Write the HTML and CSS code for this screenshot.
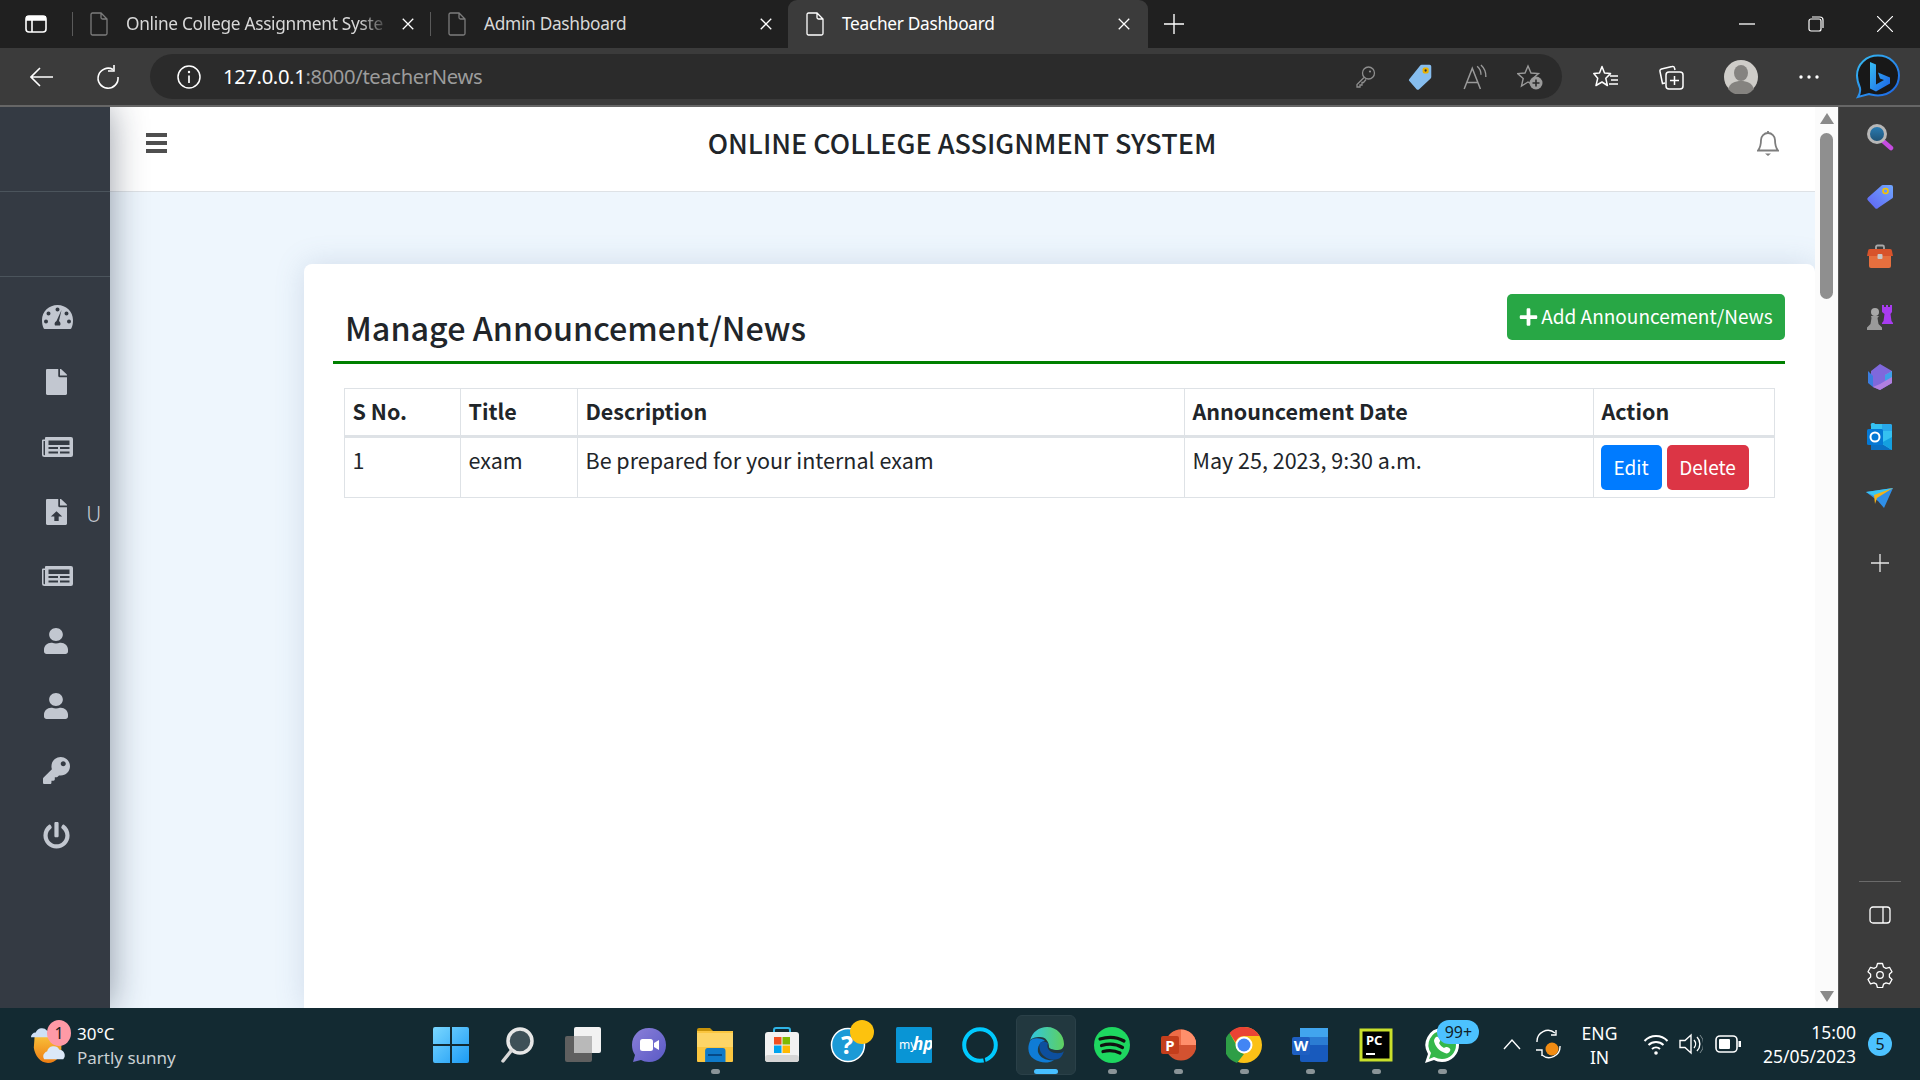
FILE: index.html
```html
<!DOCTYPE html>
<html lang="en">
<head>
<meta charset="utf-8">
<title>Teacher Dashboard</title>
<link rel="stylesheet" href="styles.css">
</head>
<body>
<svg class="defs" aria-hidden="true">
  <symbol id="doc" viewBox="0 0 18 24"><path d="M2.5 1h8.5l6 6v14.5a1.5 1.5 0 0 1-1.5 1.5h-13A1.5 1.5 0 0 1 1 21.5V2.5A1.5 1.5 0 0 1 2.5 1zM11 1v4.500A1.500 1.500 0 0 0 12.500 7H17" fill="none" stroke="currentColor" stroke-width="1.300"/></symbol>
  <symbol id="x" viewBox="0 0 16 16"><path d="M2 2l12 12M14 2L2 14" stroke="currentColor" stroke-width="1.500" fill="none"/></symbol>
  <symbol id="fa-file" viewBox="0 0 384 512" preserveAspectRatio="none"><path d="M224 136V0H24C10.700 0 0 10.700 0 24v464c0 13.300 10.700 24 24 24h336c13.300 0 24-10.700 24-24V160H248c-13.200 0-24-10.800-24-24zm160-14.100v6.100H256V0h6.100c6.400 0 12.500 2.500 17 7l97.900 98c4.500 4.500 7 10.600 7 16.900z"/></symbol>
  <symbol id="fa-news" viewBox="0 0 62 40" preserveAspectRatio="none"><path fill-rule="evenodd" d="M8 0h50a4 4 0 0 1 4 4v32a4 4 0 0 1-4 4H5a5 5 0 0 1-5-5V7a2 2 0 0 1 2-2h4V2a2 2 0 0 1 2-2zM3 8v27a2 2 0 0 0 3 1V8zm10-1v9h42V7zm0 13v4h19v-4zm23 0v4h19v-4zM13 29v4h19v-4zm23 0v4h19v-4z"/></symbol>
  <symbol id="fa-user" viewBox="0 0 448 512" preserveAspectRatio="none"><path d="M224 256c70.700 0 128-57.300 128-128S294.700 0 224 0 96 57.300 96 128s57.300 128 128 128zm89.600 32h-16.700c-22.200 10.200-46.900 16-72.900 16s-50.600-5.800-72.900-16h-16.700C60.200 288 0 348.200 0 422.400V464c0 26.500 21.500 48 48 48h352c26.500 0 48-21.500 48-48v-41.600c0-74.200-60.200-134.400-134.400-134.400z"/></symbol>
</svg>

<header class="tabbar">
  <svg class="tab-panel" viewBox="0 0 22 18"><rect x="1" y="1" width="20" height="16" rx="3" fill="none" stroke="#fff" stroke-width="1.600"/><path d="M1 5h20M7 5v12" stroke="#fff" stroke-width="1.600" fill="none"/><rect x="1" y="1" width="20" height="4" fill="#fff"/></svg>
  <div class="tab">
    <svg class="tab-doc dim"><use href="#doc"/></svg>
    <span class="tab-title fade">Online College Assignment Syste</span>
    <svg class="tab-x"><use href="#x"/></svg>
  </div>
  <div class="tab">
    <svg class="tab-doc dim"><use href="#doc"/></svg>
    <span class="tab-title">Admin Dashboard</span>
    <svg class="tab-x"><use href="#x"/></svg>
  </div>
  <div class="tab tab-active">
    <svg class="tab-doc"><use href="#doc"/></svg>
    <span class="tab-title">Teacher Dashboard</span>
    <svg class="tab-x"><use href="#x"/></svg>
  </div>
  <svg class="tab-new" viewBox="0 0 22 22"><path d="M11 0v22M0 11h22" stroke="#fff" stroke-width="1.500"/></svg>
  <div class="win-controls">
    <svg class="win-btn" viewBox="0 0 16 16"><path d="M0 8h16" stroke="#fff" stroke-width="1.300"/></svg>
    <svg class="win-btn" viewBox="0 0 16 16"><rect x="1" y="3" width="12" height="12" rx="2" fill="none" stroke="#fff" stroke-width="1.200"/><path d="M4 1h8a3 3 0 0 1 3 3v8" fill="none" stroke="#fff" stroke-width="1.200"/></svg>
    <svg class="win-btn" viewBox="0 0 16 16"><path d="M0 0l16 16M16 0L0 16" stroke="#fff" stroke-width="1.200"/></svg>
  </div>
</header>

<div class="toolbar">
  <svg class="tool tool-back" viewBox="0 0 24 20"><path d="M23 10H1M10 1l-9 9 9 9" fill="none" stroke="#fff" stroke-width="1.600"/></svg>
  <svg class="tool tool-reload" viewBox="0 0 24 24"><path d="M17 4.500A10 10 0 1 0 22 12" fill="none" stroke="#fff" stroke-width="1.600"/><path d="M18 0v6h-6" fill="none" stroke="#fff" stroke-width="1.600"/></svg>
  <div class="omnibox">
    <svg class="omni-info" viewBox="0 0 24 24"><circle cx="12" cy="12" r="11" fill="none" stroke="#fff" stroke-width="1.500"/><path d="M12 10.500V18" stroke="#fff" stroke-width="1.700"/><circle cx="12" cy="7" r="1.200" fill="#fff"/></svg>
    <span class="url"><span class="url-host">127.0.0.1</span>:8000/teacherNews</span>
    <div class="omni-actions">
      <svg class="omni-ico" viewBox="0 0 26 26"><circle cx="16.500" cy="9" r="6" fill="none" stroke="#8e8e8e" stroke-width="1.300"/><path d="M12 13.500L5 20.500v2.500h3v-2h2v-2.500h1.500l2.500-3" fill="none" stroke="#8e8e8e" stroke-width="1.300"/><circle cx="18" cy="7.500" r="1.100" fill="#8e8e8e"/></svg>
      <svg class="omni-ico" viewBox="0 0 26 30"><path d="M15 1h9a2 2 0 0 1 2 2v12a3 3 0 0 1-1 2L12 29a2 2 0 0 1-3 0L1 20a2 2 0 0 1 0-3L13 2a3 3 0 0 1 2-1z" fill="#86bdee"/><rect x="16" y="4" width="7" height="7" rx="2" fill="#e9b100"/><circle cx="19.500" cy="7.500" r="1.300" fill="#333"/></svg>
      <svg class="omni-ico" viewBox="0 0 24 24"><path d="M2 23L9.500 4 17 23M4.500 17h10" fill="none" stroke="#9a9a9a" stroke-width="1.400"/><path d="M14 2a10 10 0 0 1 3.500 8M17.500 1a14 14 0 0 1 4.500 11" fill="none" stroke="#9a9a9a" stroke-width="1.300"/></svg>
      <svg class="omni-ico" viewBox="0 0 26 26"><path d="M11 2l3 7 7.500.6-5.700 4.900 1.800 7.400L11 18l-6.500 4 1.700-7.500L.6 9.600 8 9z" fill="none" stroke="#9a9a9a" stroke-width="1.400"/><circle cx="19" cy="19" r="6.500" fill="#9a9a9a"/><path d="M19 15.500v7M15.500 19h7" stroke="#2b2b2b" stroke-width="1.600"/></svg>
    </div>
  </div>
  <div class="tool-right">
    <svg class="tool-ico" viewBox="0 0 26 26"><path d="M9 2.500l2.500 6.500 6 .6-4.700 4.700 1.600 7.200L9 18l-6 3.500 1.700-7.200L0.800 9.600 6.500 9z" fill="none" stroke="#fff" stroke-width="1.500" stroke-linejoin="round"/><path d="M17 12h8M18 16h7M16 20h9" stroke="#fff" stroke-width="1.500"/></svg>
    <svg class="tool-ico" viewBox="0 0 26 26"><path d="M7 19l-2.500.5L2 7.500A2 2 0 0 1 3.500 5L14 2.500A2 2 0 0 1 16.500 4l.5 2" fill="none" stroke="#fff" stroke-width="1.500"/><rect x="8" y="8" width="17" height="17" rx="3" fill="none" stroke="#fff" stroke-width="1.500"/><path d="M16.500 12v9M12 16.500h9" stroke="#fff" stroke-width="1.500"/></svg>
    <svg class="tool-avatar" viewBox="0 0 34 34"><circle cx="17" cy="17" r="17" fill="#cfcdc9"/><ellipse cx="17" cy="13" rx="7" ry="8" fill="#858380"/><path d="M4 29c2-6 7-8 13-8s11 2 13 8a17 17 0 0 1-26 0z" fill="#858380"/></svg>
    <svg class="tool-more" viewBox="0 0 20 4"><circle cx="2" cy="2" r="1.700" fill="#fff"/><circle cx="10" cy="2" r="1.700" fill="#fff"/><circle cx="18" cy="2" r="1.700" fill="#fff"/></svg>
    <svg class="tool-bing" viewBox="0 0 45 45"><defs><linearGradient id="bg1" x1="0" y1="0" x2="1" y2="1"><stop offset="0" stop-color="#37bdf3"/><stop offset="1" stop-color="#1b61e4"/></linearGradient></defs><path d="M22 1.500c11.500 0 21 8.500 21 20s-9 20-21 20c-3.500 0-6.500-1-9-1.500L2 43c2-3 2.500-6 2-9-1.500-3.500-3-7-3-12.500C1 10 10.500 1.500 22 1.500z" fill="#181818" stroke="url(#bg1)" stroke-width="2"/><path d="M14 8l6 2.500v20l8-4.500-4-1.500-2-6 12 5v6l-14 8-6-3z" fill="url(#bg1)"/></svg>
  </div>
</div>

<main class="workspace">
  <div class="webpage">
    <aside class="sidebar">
      <div class="side-brand"></div>
      <div class="side-user"></div>
      <nav class="side-nav">
        <a class="nav-item"><svg class="nav-ico ico-gauge" viewBox="0 0 62 48" preserveAspectRatio="none"><path fill-rule="evenodd" d="M31 0C14 0 0 13 0 30c0 6 1 12 3 16a3 3 0 0 0 3 2h50a3 3 0 0 0 3-2c2-4 3-10 3-16C62 13 48 0 31 0zM31 5a4 4 0 1 1 0 8 4 4 0 0 1 0-8zM13 13a4 4 0 1 1 0 8 4 4 0 0 1 0-8zm36 0a4 4 0 1 1 0 8 4 4 0 0 1 0-8zM8 29a4 4 0 1 1 0 8 4 4 0 0 1 0-8zm46 0a4 4 0 1 1 0 8 4 4 0 0 1 0-8zM39 10l-5 22a7 7 0 0 1 3 6 7 7 0 0 1-1 3H26a7 7 0 0 1 3-9z"/></svg></a>
        <a class="nav-item"><svg class="nav-ico ico-file"><use href="#fa-file"/></svg></a>
        <a class="nav-item"><svg class="nav-ico ico-news"><use href="#fa-news"/></svg></a>
        <a class="nav-item"><svg class="nav-ico ico-file" viewBox="0 0 384 512" preserveAspectRatio="none"><path d="M224 136V0H24C10.700 0 0 10.700 0 24v464c0 13.300 10.700 24 24 24h336c13.300 0 24-10.700 24-24V160H248c-13.200 0-24-10.800-24-24zm160-14.100v6.100H256V0h6.100c6.400 0 12.500 2.500 17 7l97.900 98c4.500 4.500 7 10.600 7 16.900z"/><path d="M192 240l-104 104h64v88h80v-88h64z" fill="#343a43"/></svg><span class="nav-label">U</span></a>
        <a class="nav-item"><svg class="nav-ico ico-news"><use href="#fa-news"/></svg></a>
        <a class="nav-item"><svg class="nav-ico ico-user"><use href="#fa-user"/></svg></a>
        <a class="nav-item"><svg class="nav-ico ico-user"><use href="#fa-user"/></svg></a>
        <a class="nav-item"><svg class="nav-ico ico-key" viewBox="0 0 512 512" preserveAspectRatio="none"><path d="M512 176.001C512 273.203 433.202 352 336 352c-11.220 0-22.190-1.062-32.827-3.069l-24.012 27.014A23.999 23.999 0 0 1 261.223 384H224v40c0 13.255-10.745 24-24 24h-40v40c0 13.255-10.745 24-24 24H24c-13.255 0-24-10.745-24-24v-78.059c0-6.365 2.529-12.470 7.029-16.971l161.802-161.802C163.108 213.814 160 195.271 160 176 160 78.798 238.797.001 335.999 0 433.488-.001 512 78.511 512 176.001zM336 128c0 26.510 21.490 48 48 48s48-21.490 48-48-21.490-48-48-48-48 21.490-48 48z"/></svg></a>
        <a class="nav-item"><svg class="nav-ico ico-key" viewBox="0 0 512 512" preserveAspectRatio="none"><path d="M400 54.100c63 45 104 118.600 104 201.900 0 136.800-110.800 247.700-247.500 248C120 504.300 8.200 393 8 256.400 7.900 173.100 48.900 99.300 111.800 54.200c11.700-8.300 28-4.800 35 7.700L162.600 90c5.900 10.500 3.100 23.800-6.600 31-41.500 30.800-68 79.600-68 134.900-.1 92.300 74.500 168.100 168 168.100 91.600 0 168.600-74.200 168-169.100-.3-51.800-24.700-101.800-68.100-134-9.700-7.200-12.400-20.500-6.500-30.900l15.800-28.100c7-12.400 23.200-16.100 34.800-7.800zM296 264V24c0-13.300-10.700-24-24-24h-32c-13.300 0-24 10.700-24 24v240c0 13.300 10.700 24 24 24h32c13.300 0 24-10.700 24-24z"/></svg></a>
      </nav>
    </aside>
    <div class="content">
      <div class="topbar">
        <div class="bars"><span class="bar"></span><span class="bar"></span><span class="bar"></span></div>
        <h1 class="app-title">ONLINE COLLEGE ASSIGNMENT SYSTEM</h1>
        <svg class="bell" viewBox="0 0 22 26"><path d="M11 1v2M11 3a7 7 0 0 0-7 7c0 6-1 8-3 10.500h20C19 18 18 16 18 10a7 7 0 0 0-7-7z" fill="none" stroke="#7d7d7d" stroke-width="1.800"/><path d="M8 23.500h6l-3 2.500z" fill="#7d7d7d"/></svg>
      </div>
      <section class="card">
        <div class="card-head">
          <h2 class="card-title">Manage Announcement/News</h2>
          <a class="btn btn-add"><svg class="plus" viewBox="0 0 448 512"><path d="M416 208H272V64c0-17.670-14.330-32-32-32h-32c-17.670 0-32 14.330-32 32v144H32c-17.670 0-32 14.330-32 32v32c0 17.670 14.330 32 32 32h144v144c0 17.670 14.330 32 32 32h32c17.670 0 32-14.330 32-32V304h144c17.670 0 32-14.330 32-32v-32c0-17.670-14.330-32-32-32z"/></svg>Add Announcement/News</a>
        </div>
        <table class="data">
          <colgroup><col class="c1"><col class="c2"><col class="c3"><col class="c4"><col class="c5"></colgroup>
          <thead><tr><th>S No.</th><th>Title</th><th>Description</th><th>Announcement Date</th><th>Action</th></tr></thead>
          <tbody><tr><td>1</td><td>exam</td><td>Be prepared for your internal exam</td><td>May 25, 2023, 9:30 a.m.</td><td class="actions"><a class="btn btn-edit">Edit</a><a class="btn btn-del">Delete</a></td></tr></tbody>
        </table>
      </section>
    </div>
    <div class="scrollbar">
      <span class="arrow-up"></span>
      <span class="thumb"></span>
      <span class="arrow-down"></span>
    </div>
  </div>
  <aside class="edgebar">
    <svg class="edge-ico" viewBox="0 0 28 28"><defs><linearGradient id="sg" x1="0" y1="0" x2="0" y2="1"><stop offset="0" stop-color="#2a7fb8"/><stop offset="1" stop-color="#1f4f70"/></linearGradient></defs><path d="M17 18l8 7" stroke="#c54ce0" stroke-width="4.500" stroke-linecap="round"/><circle cx="11" cy="11" r="8.500" fill="url(#sg)" stroke="#b7b7b7" stroke-width="3"/></svg>
    <svg class="edge-ico" viewBox="0 0 28 28"><defs><linearGradient id="tg" x1="1" y1="0" x2="0" y2="1"><stop offset="0" stop-color="#6fa6ff"/><stop offset="1" stop-color="#5f63f2"/></linearGradient></defs><path d="M17 2h8a2 2 0 0 1 2 2v10a2 2 0 0 1-1 1.500L12 25a2 2 0 0 1-3 0L2 17.500a2 2 0 0 1 0-3L15 3a3 3 0 0 1 2-1z" fill="url(#tg)"/><circle cx="19.500" cy="8" r="2.500" fill="none" stroke="#f5c400" stroke-width="1.600"/></svg>
    <svg class="edge-ico" viewBox="0 0 28 28"><path d="M10 7V4a1.500 1.500 0 0 1 1.500-1.500h5A1.500 1.500 0 0 1 18 4v3" fill="none" stroke="#a8a8a8" stroke-width="1.800"/><path d="M2 8a2 2 0 0 1 2-2h20a2 2 0 0 1 2 2l1 5H1z" fill="#d8532b"/><path d="M3 13h22v10a2 2 0 0 1-2 2H5a2 2 0 0 1-2-2z" fill="#e66f3e"/><rect x="11.500" y="11" width="5" height="5" rx="1" fill="#c8c8c8"/></svg>
    <svg class="edge-ico" viewBox="0 0 28 28"><path d="M16 2h2v2h2V2h2v2h2V2h2v7l-1.500 2 1 7 1.500 2v1H16v-1l1.500-2 1-7L16 9z" fill="#a83cf0"/><circle cx="9" cy="9" r="4" fill="#a8a8a8"/><path d="M5 13h8l-1.500 2 1 6 3.500 3.500V27H1v-2.500L4.500 21l1-6z" fill="#9a9a9a"/></svg>
    <svg class="edge-ico" viewBox="0 0 28 28"><path d="M14 1l12 7v12l-12 7-7-3V13l7-4 5 3 7-4-7 10-5 3-9-2V8z" fill="#7f68dc"/><path d="M2 8l5 5v11l-5-4z" fill="#3b7ddf"/><path d="M26 8v12l-12 7-7-3 7-3 5-3v-6z" fill="#b07fe0"/><path d="M26 8v6l-7 4v-6z" fill="#3fa0e8"/></svg>
    <svg class="edge-ico" viewBox="0 0 28 28"><path d="M9 1h15a2 2 0 0 1 2 2v23a1 1 0 0 1-1 1H6a1 1 0 0 1-1-1V3a2 2 0 0 1 4-2z" fill="#35c1f1"/><path d="M16 1h8a2 2 0 0 1 2 2v5h-10z" fill="#28a8ea"/><path d="M5 14l21 13H5z" fill="#0a6fc2"/><path d="M26 14v13L15 20z" fill="#14a0e0"/><rect x="1" y="6" width="16" height="16" rx="1.500" fill="#0478d4"/><circle cx="9" cy="14" r="4.500" fill="none" stroke="#fff" stroke-width="2"/></svg>
    <svg class="edge-ico" viewBox="0 0 28 28"><path d="M0 9L27 5l-9 20-6-7z" fill="#2f8fe8"/><path d="M0 9l27-4-17 9z" fill="#38c6f4"/><path d="M8 12l19-7-16 10-2 6z" fill="#f2b21a"/></svg>
    <svg class="edge-plus" viewBox="0 0 18 18"><path d="M9 0v18M0 9h18" stroke="#e6e6e6" stroke-width="1.300"/></svg>
    <div class="edge-bottom">
      <span class="edge-rule"></span>
      <svg class="edge-panel" viewBox="0 0 22 18"><rect x="1" y="1" width="20" height="16" rx="3" fill="none" stroke="#fff" stroke-width="1.300"/><path d="M14 1v16" stroke="#fff" stroke-width="1.300"/></svg>
      <svg class="edge-gear" viewBox="0 0 26 26"><path d="M10.500 1.500h5l1 3.500 2.500 1.300 3.500-1 2.500 4.400-2.600 2.500v2.800l2.600 2.500-2.500 4.400-3.500-1-2.500 1.300-1 3.500h-5l-1-3.500-2.500-1.300-3.500 1-2.500-4.400 2.600-2.500v-2.800L1 9.700l2.500-4.400 3.500 1 2.500-1.300z" fill="none" stroke="#fff" stroke-width="1.300" stroke-linejoin="round"/><circle cx="13" cy="13" r="3.300" fill="none" stroke="#fff" stroke-width="1.300"/></svg>
    </div>
  </aside>
</main>

<footer class="taskbar">
  <div class="weather">
    <svg class="weather-ico" viewBox="0 0 40 44"><defs><linearGradient id="sun" x1="0" y1="0" x2="0" y2="1"><stop offset="0" stop-color="#f9c33c"/><stop offset="1" stop-color="#ee7d12"/></linearGradient></defs><path d="M5 12h28v14a15 15 0 0 1-14 16C11 42 5 34 4 26z" fill="url(#sun)"/><path d="M1 15a5 5 0 0 1 5-5 7 7 0 0 1 12-2 5 5 0 0 1 4 7z" fill="#cfe0f5"/><path d="M15 38a5 5 0 0 1 3-8 7 7 0 0 1 13-2 6 6 0 0 1 4 10z" fill="#dbe8f8"/></svg>
    <span class="weather-badge">1</span>
    <div class="weather-text"><span class="temp">30°C</span><span class="cond">Partly sunny</span></div>
  </div>
  <div class="apps">
    <div class="app"><svg class="app-ico" viewBox="0 0 36 36"><defs><linearGradient id="w1" x1="0" y1="0" x2="1" y2="1"><stop offset="0" stop-color="#7ad7ff"/><stop offset="1" stop-color="#1c9bf5"/></linearGradient></defs><path d="M2 0h15v17H0V2a2 2 0 0 1 2-2zM19 0h15a2 2 0 0 1 2 2v15H19zM0 19h17v17H2a2 2 0 0 1-2-2zM19 19h17v15a2 2 0 0 1-2 2H19z" fill="url(#w1)"/></svg></div>
    <div class="app"><svg class="app-ico" viewBox="0 0 36 36"><circle cx="21" cy="14" r="12" fill="#3e5058" stroke="#e7e7e7" stroke-width="3.500"/><path d="M12 24L4 34" stroke="#d8d8d8" stroke-width="3.500" stroke-linecap="round"/></svg></div>
    <div class="app"><svg class="app-ico" viewBox="0 0 36 36"><rect x="0" y="9" width="27" height="26" rx="2" fill="#5f5f5f"/><rect x="9" y="0" width="27" height="26" rx="2" fill="#f2f2f2"/><rect x="9" y="9" width="18" height="17" fill="#b9b9b9"/></svg></div>
    <div class="app"><svg class="app-ico" viewBox="0 0 36 36"><defs><linearGradient id="ch" x1="0" y1="0" x2="1" y2="1"><stop offset="0" stop-color="#8a7fd8"/><stop offset="1" stop-color="#5a5ac6"/></linearGradient></defs><path d="M18 1c10 0 17 7.500 17 17s-7 17-17 17c-3 0-6-1-8-2l-8 2 2-7c-2-3-3-6-3-10C1 8.500 8 1 18 1z" fill="url(#ch)"/><rect x="9" y="12" width="13" height="12" rx="2.500" fill="#fff"/><path d="M23 16l5-3v10l-5-3z" fill="#fff"/></svg></div>
    <div class="app"><svg class="app-ico" viewBox="0 0 36 36"><path d="M0 3a2 2 0 0 1 2-2h11l3 3h-16z" fill="#c8930a"/><path d="M0 4h36v30a1 1 0 0 1-1 1H1a1 1 0 0 1-1-1z" fill="#fbc63f"/><path d="M0 6h36v14H0z" fill="#fdd567"/><path d="M6 35V24a3 3 0 0 1 3-3h18a3 3 0 0 1 3 3v11z" fill="#0f7ac9" transform="translate(3 0) scale(.85 1)"/><rect x="11" y="27" width="14" height="2" fill="#054a88"/></svg><span class="dot"></span></div>
    <div class="app"><svg class="app-ico" viewBox="0 0 36 36"><path d="M10 6V3a2 2 0 0 1 2-2h12a2 2 0 0 1 2 2v3" fill="none" stroke="#2fb4e6" stroke-width="2"/><rect x="1" y="5" width="34" height="30" rx="3" fill="#f2f2f2"/><rect x="1" y="28" width="34" height="7" rx="3" fill="#d6d6d6"/><rect x="10" y="10" width="7.500" height="7.500" fill="#f25022"/><rect x="18.500" y="10" width="7.500" height="7.500" fill="#7fba00"/><rect x="10" y="18.500" width="7.500" height="7.500" fill="#00a4ef"/><rect x="18.500" y="18.500" width="7.500" height="7.500" fill="#ffb900"/></svg></div>
    <div class="app"><svg class="app-ico" viewBox="0 0 36 36"><circle cx="18" cy="18" r="16.500" fill="#1b9ad6" stroke="#fff" stroke-width="1.500"/><text x="17" y="27" class="svg-q">?</text></svg><span class="help-badge"></span></div>
    <div class="app"><svg class="app-ico" viewBox="0 0 36 36"><rect width="36" height="36" rx="1.500" fill="#0995d5"/><text x="3" y="22" class="svg-my">my</text><text x="17" y="23" class="svg-hp">hp</text></svg></div>
    <div class="app"><svg class="app-ico" viewBox="0 0 36 36"><circle cx="18" cy="18" r="15.800" fill="none" stroke="#00caff" stroke-width="4"/><path d="M21.500 29l1.500 7" stroke="#132a32" stroke-width="1.600"/></svg></div>
    <div class="app app-active"><svg class="app-ico" viewBox="0 0 36 36"><defs><linearGradient id="e1" x1="0" y1="0" x2="1" y2="0"><stop offset="0" stop-color="#30c6e0"/><stop offset="1" stop-color="#5fd05f"/></linearGradient></defs><path d="M2 14C4 5 11 0 19 0c10 0 17 8 17 17 0 3-2 6-6 6-6 0-9-2-9-3 0-5-3-10-9-10-5 0-9 1-10 4z" fill="url(#e1)"/><path d="M2 14c-3 7-2 14 4 18 6 4 14 5 20 1-5 1-14-1-16-8-1-6 3-11 7-11-3-3-12-4-15 0z" fill="#0f7cd6"/><path d="M12 16c-2 6 1 13 9 16 3 1 8 1 11-1 2-2 3-4 4-7-2 3-10 3-14 0-3-3-3-5-2-8-3-2-6-2-8 0z" fill="#0d4f9e"/></svg><span class="dot dot-on"></span></div>
    <div class="app"><svg class="app-ico" viewBox="0 0 36 36"><circle cx="18" cy="18" r="18" fill="#1ed760"/><path d="M6 12c8-2.500 17-2 24 2M7.500 18.500c7-2 15-1.500 21 2M9 24.500c6-1.500 12-1 17 1.500" fill="none" stroke="#111" stroke-width="3.200" stroke-linecap="round"/></svg><span class="dot"></span></div>
    <div class="app"><svg class="app-ico" viewBox="0 0 36 36"><circle cx="21" cy="18" r="15.500" fill="#d35230"/><path d="M21 2.500a15.500 15.500 0 0 1 15.500 15.500H21z" fill="#ff8f6b"/><path d="M21 2.500V18H5.500A15.500 15.500 0 0 1 21 2.500z" fill="#ed6c47"/><rect x="1" y="9" width="18" height="18" rx="2" fill="#c43e1c"/><text x="10" y="24" class="svg-p">P</text></svg><span class="dot"></span></div>
    <div class="app"><svg class="app-ico" viewBox="0 0 36 36"><circle cx="18" cy="18" r="18" fill="#fbc116"/><path d="M18 0a18 18 0 0 1 15.600 9H18a9 9 0 0 0-8.500 6L3.500 6A18 18 0 0 1 18 0z" fill="#ea4335"/><path d="M3.500 6l7.800 13.500a9 9 0 0 0 6.700 7.500L11 36A18 18 0 0 1 3.500 6z" fill="#2e9e46"/><circle cx="18" cy="18" r="8.500" fill="#fff"/><circle cx="18" cy="18" r="6.500" fill="#4285f4"/></svg><span class="dot"></span></div>
    <div class="app"><svg class="app-ico" viewBox="0 0 36 36"><rect x="8" y="1" width="28" height="34" rx="2" fill="#185abd"/><rect x="8" y="1" width="28" height="9" fill="#41a5ee"/><rect x="8" y="10" width="28" height="8" fill="#2b7cd3"/><rect x="0" y="10" width="18" height="18" rx="2" fill="#1e5fc2"/><text x="9" y="24" class="svg-p">W</text></svg><span class="dot"></span></div>
    <div class="app"><svg class="app-ico" viewBox="0 0 36 36"><rect x="3" y="3" width="30" height="30" fill="#000" stroke="#c9e02b" stroke-width="3"/><text x="8" y="18" class="svg-pc">PC</text><path d="M8 27h9" stroke="#fff" stroke-width="2"/></svg><span class="dot"></span></div>
    <div class="app"><svg class="app-ico" viewBox="0 0 36 36"><path d="M18 1a17 17 0 0 1 0 34c-3 0-6-1-8-2l-9 3 3-9A17 17 0 0 1 18 1z" fill="#fff"/><path d="M18 4a14 14 0 0 1 0 28c-3 0-5-1-8-2l-5 2 2-6A14 14 0 0 1 18 4z" fill="#35b84a"/><path d="M12 10c2-1 3 0 4 3 0 1 0 2-1 3 1 2 3 4 5 5 1-1 2-1 3-1 3 1 4 2 3 4-1 2-3 3-5 2-6-2-10-7-11-12 0-2 1-3 2-4z" fill="#fff"/></svg><span class="wa-badge">99+</span><span class="dot"></span></div>
  </div>
  <div class="tray">
    <svg class="tray-chev" viewBox="0 0 18 12"><path d="M1 11l8-9 8 9" fill="none" stroke="#fff" stroke-width="1.400"/></svg>
    <span class="tray-sync"><svg class="sync-ico" viewBox="0 0 28 30"><path d="M3 13A11 11 0 0 1 21 4M26 17A11 11 0 0 1 8 26" fill="none" stroke="#fff" stroke-width="1.400"/><path d="M22 1v5h-5M2 21h6v6" fill="none" stroke="#fff" stroke-width="1.400"/><circle cx="18" cy="20" r="6.500" fill="#f28c13"/></svg></span>
    <div class="lang"><span>ENG</span><span>IN</span></div>
    <svg class="tray-wifi" viewBox="0 0 26 22"><path d="M1.500 8a16 16 0 0 1 23 0M5.500 12a11 11 0 0 1 15 0M9 16a6 6 0 0 1 8 0" fill="none" stroke="#fff" stroke-width="2"/><circle cx="13" cy="20" r="1.800" fill="#fff"/></svg>
    <svg class="tray-vol" viewBox="0 0 24 24"><path d="M1 8.500h5l6-5.500v18l-6-5.500H1z" fill="none" stroke="#fff" stroke-width="1.400"/><path d="M15 8a6 6 0 0 1 0 8M18 5a10 10 0 0 1 0 14" fill="none" stroke="#fff" stroke-width="1.400"/><path d="M21 3a13 13 0 0 1 0 18" fill="none" stroke="#7b8a8e" stroke-width="1"/></svg>
    <svg class="tray-batt" viewBox="0 0 26 18"><rect x="1" y="1" width="21" height="16" rx="4" fill="none" stroke="#fff" stroke-width="1.600"/><rect x="4" y="4" width="11" height="10" rx="1" fill="#fff"/><rect x="23.500" y="6" width="2.500" height="6" fill="#fff"/></svg>
    <div class="clock"><span>15:00</span><span>25/05/2023</span></div>
    <span class="notif">5</span>
  </div>
</footer>
</body>
</html>
```
FILE: styles.css
```css
* { box-sizing: border-box; }
html, body { margin: 0; padding: 0; height: 100%; }
body {
  width: 1920px;
  height: 1080px;
  display: flex;
  flex-direction: column;
  overflow: hidden;
  font-family: "Noto Sans", "Liberation Sans", sans-serif;
  background: #202020;
  color: #fff;
}
.defs { width: 0; height: 0; position: absolute; }

/* browser tabs */
.tabbar { height: 48px; flex: none; display: flex; align-items: center; background: #202020; }
.tab-panel { width: 22px; height: 18px; margin-left: 25px; margin-right: 25px; flex: none; }
.tab {
  width: 358px;
  height: 48px;
  flex: none;
  display: flex;
  align-items: center;
  padding-left: 18px;
  padding-right: 15px;
  color: #d8d8d8;
  position: relative;
}
.tab::before { content: ""; position: absolute; left: 0; top: 12px; height: 24px; width: 1px; background: #5a5a5a; }
.tab-doc { width: 18px; height: 24px; flex: none; color: #fff; }
.tab-doc.dim { color: #7c7c7c; }
.tab-title {
  margin-left: 18px;
  margin-bottom: 2px;
  flex: 1;
  min-width: 0;
  font-size: 17.3px;
  letter-spacing: -0.3px;
  white-space: nowrap;
}
.fade { -webkit-mask-image: linear-gradient(90deg, #000 88%, transparent 100%); mask-image: linear-gradient(90deg, #000 88%, transparent 100%); }
.tab-x { width: 14px; height: 14px; flex: none; color: #fff; margin-left: 10px; }
.tab-active { width: 360px; background: #3b3b3b; border-radius: 9px 9px 0 0; color: #fff; padding-right: 17px; }
.tab-active::before { display: none; }
.tab-new { width: 20px; height: 20px; margin-left: 16px; flex: none; }
.win-controls { margin-left: auto; display: flex; gap: 53px; padding-right: 27px; }
.win-btn { width: 16px; height: 16px; flex: none; }

/* address toolbar */
.toolbar { height: 59px; flex: none; display: flex; align-items: center; background: #3b3b3b; border-bottom: 2px solid #666; }
.tool { flex: none; }
.tool-back { width: 24px; height: 20px; margin-left: 30px; }
.tool-reload { width: 24px; height: 26px; margin-left: 42px; }
.omnibox {
  width: 1412px;
  height: 45px;
  margin-left: 30px;
  flex: none;
  display: flex;
  align-items: center;
  background: #2b2b2b;
  border-radius: 23px;
  padding-left: 27px;
}
.omni-info { width: 24px; height: 24px; flex: none; }
.url { margin-left: 22px; margin-bottom: 2px; font-size: 20.2px; letter-spacing: -0.35px; color: #9c9c9c; }
.url-host { color: #fff; }
.omni-actions { margin-left: auto; display: flex; align-items: center; gap: 29px; padding-right: 19px; }
.omni-ico { width: 26px; height: 26px; flex: none; }
.tool-right { display: flex; align-items: center; flex: none; }
.tool-ico { width: 26px; height: 26px; flex: none; }
.tool-ico:first-child { margin-left: 31px; }
.tool-ico + .tool-ico { margin-left: 39px; }
.tool-avatar { width: 34px; height: 34px; margin-left: 40px; flex: none; }
.tool-more { width: 20px; height: 4px; margin-left: 41px; flex: none; }
.tool-bing { width: 45px; height: 45px; margin-left: 37px; flex: none; }

/* window area */
.workspace { flex: 1; min-height: 0; display: flex; }
.webpage { width: 1838px; flex: none; display: flex; background: #fff; overflow: hidden; font-family: "Noto Sans CJK SC", "Noto Sans", sans-serif; color: #212529; }
.sidebar { width: 110px; flex: none; background: #343a43; display: flex; flex-direction: column; box-shadow: 0 0 34px rgba(20, 30, 50, .45); position: relative; z-index: 2; }
.side-brand { height: 85px; border-bottom: 1px solid #4b545c; flex: none; }
.side-user { height: 85px; border-bottom: 1px solid #4b545c; flex: none; }
.side-nav { padding-top: 8px; display: flex; flex-direction: column; }
.nav-item { height: 64.75px; display: flex; align-items: center; color: #c2c7d0; fill: #c2c7d0; padding-left: 42px; padding-right: 40px; position: relative; }
.nav-ico { display: block; margin: 0 auto; flex: none; }
.ico-gauge { width: 31px; height: 24px; }
.ico-file { width: 21px; height: 26px; }
.ico-news { width: 31px; height: 20px; }
.ico-user { width: 24px; height: 26px; }
.ico-key { width: 27px; height: 27px; }
.nav-label { position: absolute; left: 86px; font-size: 22px; font-weight: 300; line-height: 1; }

.content { flex: 1; min-width: 0; display: flex; flex-direction: column; background: #eef6fd; }
.topbar { height: 85px; flex: none; background: #fff; border-bottom: 1px solid #dee2e6; display: flex; align-items: center; justify-content: space-between; padding: 0 36px 8px; }
.bars { display: flex; flex-direction: column; gap: 4px; width: 21px; margin-top: -4px; }
.bar { height: 4px; background: #4f4f4f; display: block; }
.app-title { margin: -6px 0 0; font-size: 27px; font-weight: 500; line-height: 1; color: #212529; }
.bell { width: 22px; height: 26px; flex: none; margin-top: -4px; }
.card { flex: 1; margin: 72px 0 0 194px; background: #fff; border-radius: 8px 8px 0 0; padding: 30px 30px 0 29px; box-shadow: 0 0 30px rgba(90, 120, 160, .2); }
.card-head { display: flex; justify-content: space-between; align-items: flex-start; height: 70px; border-bottom: 3px solid #008000; padding-left: 12px; }
.card-title { margin: 14px 0 0; font-size: 32.3px; font-weight: 500; line-height: 1.2; color: #212529; }
.btn { display: inline-flex; align-items: center; justify-content: center; color: #fff; border-radius: 5px; font-size: 19px; flex: none; padding-bottom: 3px; }
.btn-add { width: 278px; height: 46px; background: #28a745; }
.plus { width: 19px; height: 20px; fill: #fff; margin-right: 3px; margin-top: 3px; flex: none; }
.data { border-collapse: collapse; table-layout: fixed; width: 1430px; margin: 24px 0 0 11px; font-size: 21.5px; color: #212529; }
.data th, .data td { border: 1px solid #dee2e6; padding: 0 0 0 7.5px; text-align: left; vertical-align: top; }
.data th { height: 48px; font-weight: 700; vertical-align: middle; border-bottom: 3px solid #dee2e6; padding-bottom: 4px; }
.data td { height: 61px; padding-top: 6px; }
.c1 { width: 116px; }
.c2 { width: 117px; }
.c3 { width: 607px; }
.c4 { width: 409px; }
.c5 { width: 181px; }
.data td.actions { padding-top: 7px; padding-left: 6.5px; }
.btn-edit { width: 61px; height: 45px; background: #007bff; margin-right: 5px; }
.btn-del { width: 82px; height: 45px; background: #dc3545; }

.scrollbar { width: 23px; flex: none; background: #fbfbfb; display: flex; flex-direction: column; align-items: center; padding-top: 6px; }
.arrow-up { width: 0; height: 0; border-left: 7px solid transparent; border-right: 7px solid transparent; border-bottom: 11px solid #8a8a8a; flex: none; }
.thumb { width: 13px; height: 166px; background: #8f8f8f; border-radius: 7px; margin-top: 9px; flex: none; }
.arrow-down { width: 0; height: 0; border-left: 7px solid transparent; border-right: 7px solid transparent; border-top: 11px solid #8a8a8a; flex: none; margin-top: auto; margin-bottom: 6px; }

/* edge side panel */
.edgebar { width: 82px; flex: none; background: #3b3b3b; border-left: 1px solid #555; display: flex; flex-direction: column; align-items: center; padding-top: 16px; }
.edge-ico { width: 28px; height: 28px; margin-bottom: 32px; flex: none; }
.edge-plus { width: 18px; height: 18px; margin-top: 11px; flex: none; }
.edge-bottom { margin-top: auto; display: flex; flex-direction: column; align-items: center; padding-bottom: 20px; }
.edge-rule { width: 42px; height: 1px; background: #6a6a6a; margin-bottom: 24px; }
.edge-panel { width: 22px; height: 18px; margin-bottom: 38px; flex: none; }
.edge-gear { width: 26px; height: 26px; flex: none; }

/* windows taskbar */
.taskbar { height: 72px; flex: none; display: flex; background: #132a32; font-family: "Noto Sans", sans-serif; }
.weather { width: 418px; flex: none; display: flex; align-items: center; padding-left: 30px; position: relative; }
.weather-ico { width: 38px; height: 42px; flex: none; }
.weather-badge { position: absolute; left: 47px; top: 12px; width: 24px; height: 26px; border-radius: 50%; background: #ff9aa6; color: #222; font-size: 16px; text-align: center; line-height: 26px; }
.weather-text { display: flex; flex-direction: column; margin-left: 9px; margin-top: 4px; font-size: 17px; line-height: 24px; }
.temp { color: #fff; }
.cond { color: #c9d0d3; }
.apps { display: flex; flex: none; }
.app { width: 66.1px; height: 72px; display: flex; align-items: center; justify-content: center; position: relative; flex: none; }
.app-ico { width: 36px; height: 36px; flex: none; margin-top: 2px; }
.app-active::before { content: ""; position: absolute; left: 3px; right: 3px; top: 7px; bottom: 5px; background: #22383f; border: 1px solid #2a4048; border-radius: 6px; }
.app-active .app-ico { position: relative; }
.dot { position: absolute; left: 29px; top: 61px; width: 9px; height: 5px; border-radius: 3px; background: #8a9498; }
.dot-on { left: 21px; width: 24px; background: #47bfff; }
.help-badge { position: absolute; left: 35px; top: 12px; width: 24px; height: 24px; border-radius: 50%; background: #fdc20e; }
.wa-badge { position: absolute; left: 28px; top: 12px; width: 42px; height: 24px; border-radius: 12px; background: #4cc2ff; color: #102028; font-size: 16px; line-height: 24px; text-align: center; }
.svg-q { font: 700 25px "Noto Sans", sans-serif; fill: #fff; text-anchor: middle; }
.svg-my { font: 400 12px "Noto Sans", sans-serif; fill: #fff; }
.svg-hp { font: italic 700 17px "Noto Sans", sans-serif; fill: #fff; }
.svg-p { font: 700 15px "Noto Sans", sans-serif; fill: #fff; text-anchor: middle; }
.svg-pc { font: 700 13px "Noto Sans", sans-serif; fill: #fff; }
.tray { flex: 1; display: flex; align-items: center; padding-left: 27px; padding-right: 28px; min-width: 0; }
.tray-chev { width: 18px; height: 12px; flex: none; }
.tray-sync { margin-left: 13px; display: flex; flex: none; }
.sync-ico { width: 28px; height: 30px; }
.lang { width: 44px; margin-left: 16px; margin-top: 2px; display: flex; flex-direction: column; align-items: center; font-size: 17.5px; line-height: 24px; flex: none; }
.tray-wifi { width: 26px; height: 22px; margin-left: 21px; flex: none; }
.tray-vol { width: 24px; height: 24px; margin-left: 10px; flex: none; }
.tray-batt { width: 26px; height: 18px; margin-left: 12px; flex: none; }
.clock { margin-left: auto; display: flex; flex-direction: column; align-items: flex-end; font-size: 17.5px; line-height: 24px; }
.notif { margin-left: 12px; width: 24px; height: 24px; border-radius: 50%; background: #4cc2ff; color: #102028; font-size: 16px; line-height: 24px; text-align: center; flex: none; }
```
